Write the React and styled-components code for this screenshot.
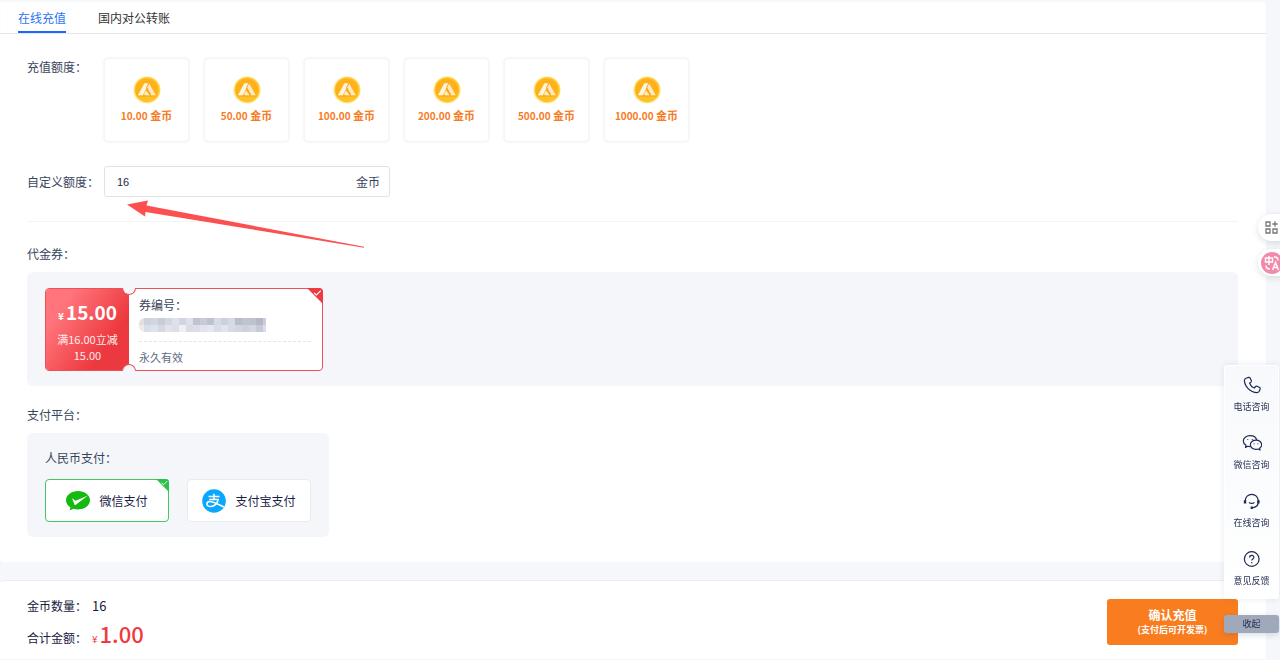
import { useState } from 'react'
import styled, { createGlobalStyle } from 'styled-components'

const GlobalStyle = createGlobalStyle`
  * {
    box-sizing: border-box;
  }
  body {
    margin: 0;
    background: #f5f7fa;
    color: #38445c;
    font-family: 'Noto Sans CJK SC', 'Noto Sans', sans-serif;
    font-size: 12px;
    line-height: 18px;
  }
  button, input {
    font: inherit;
    color: inherit;
  }
  button {
    padding: 0;
    cursor: pointer;
  }
`

const Page = styled.div`
  position: relative;
  min-height: 100vh;
  padding-right: 14px;
  overflow: hidden;
`

const Card = styled.main`
  background: #fff;
  border-radius: 0 0 4px 4px;
  padding-bottom: 25px;
`

const Tabs = styled.nav`
  display: flex;
  gap: 32px;
  height: 34px;
  padding: 0 18px;
  border-bottom: 1px solid #e5e8f0;
  box-shadow: inset 0 2px 2px #f7f8fa;
`

const Tab = styled.a`
  height: 33px;
  padding-top: 9px;
  text-decoration: none;
  color: ${p => p.$active ? '#2b74f5' : '#333'};
  border-bottom: 2px solid ${p => p.$active ? '#1769ff' : 'transparent'};
`

const Body = styled.div`
  padding: 24px 28px 0 27px;
`

const Row = styled.div`
  display: flex;
  align-items: ${p => p.$align || 'center'};
  margin-bottom: 24px;
`

const RowLabel = styled.label`
  width: 77px;
  flex: none;
`

const Amounts = styled.div`
  display: flex;
  gap: 15px;
`

const Amount = styled.button`
  display: flex;
  flex-direction: column;
  align-items: center;
  gap: 3px;
  width: 85px;
  height: 84px;
  padding-top: 17px;
  background: #fff;
  border: 1px solid #f5f5f6;
  border-radius: 4px;
  box-shadow: 0 0 3px rgba(0, 0, 0, 0.07);
  color: #f77b1f;
  font-weight: 700;
  font-size: 11px;
  line-height: 16px;
`

const Num = styled.span`
  font-size: ${p => p.$size || 10}px;
`

const CustomBox = styled.div`
  display: flex;
  align-items: center;
  width: 286px;
  height: 31px;
  padding: 0 9px 0 12px;
  border: 1px solid #dfe2ea;
  border-radius: 3px;
  input {
    flex: 1;
    min-width: 0;
    padding: 0;
    border: 0;
    outline: 0;
    background: none;
    color: #1d2740;
    font-family: 'Liberation Sans', sans-serif;
    font-size: 11px;
  }
`

const Divider = styled.hr`
  margin: 0 0 23px;
  border: 0;
  border-top: 1px solid #f3f4f6;
`

const Title = styled.h2`
  margin: 0 0 ${p => p.$inner ? 12 : 9}px;
  font-size: 12px;
  font-weight: 400;
`

const Panel = styled.section`
  width: ${p => p.$width || 'auto'};
  margin-bottom: 20px;
  padding: 16px 18px 15px;
  background: #f4f6fa;
  border-radius: 6px;
  &:last-child {
    margin-bottom: 0;
  }
`

const Voucher = styled.button`
  position: relative;
  display: flex;
  width: 278px;
  height: 83px;
  background: #fff;
  border: 1px solid #ee5058;
  border-radius: 4px;
  text-align: left;
`

const VoucherPrice = styled.div`
  display: flex;
  flex-direction: column;
  align-items: center;
  width: 83px;
  height: 81px;
  padding: 9px 8px 0;
  border-radius: 3px 0 0 3px;
  background: linear-gradient(125deg, #ff757b 20%, #ec393f 72%);
  color: #fff;
  font-size: 11px;
  line-height: 16px;
  text-align: center;
`

const Price = styled.div`
  font-size: 19px;
  font-weight: 700;
  line-height: 28px;
  small {
    font-size: 10px;
    margin-right: 2px;
  }
`

const Condition = styled.div`
  margin-top: 1px;
  opacity: 0.9;
`

const VoucherInfo = styled.div`
  flex: 1;
  padding: 7px 11px 0 10px;
`

const Mosaic = styled.svg`
  display: block;
  width: 127px;
  height: 14px;
  margin: 4px 0 9px;
  border-radius: 6px 0 0 6px;
`

const Valid = styled.div`
  padding-top: 6px;
  border-top: 1px dashed #e3e5ea;
  color: #5c6b80;
  font-size: 11px;
`

const Notch = styled.i`
  position: absolute;
  left: 76px;
  width: 14px;
  height: 7px;
  background: #f4f6fa;
  border: 1px solid #ee5058;
  ${p => p.$bottom
    ? 'bottom: -1px; border-bottom: 0; border-radius: 7px 7px 0 0;'
    : 'top: -1px; border-top: 0; border-radius: 0 0 7px 7px;'}
`

const Corner = styled.svg`
  position: absolute;
  top: -1px;
  right: -1px;
  color: ${p => p.$color};
`

const Pays = styled.div`
  display: flex;
  gap: 18px;
`

const Pay = styled.button`
  position: relative;
  display: flex;
  align-items: center;
  justify-content: center;
  gap: 9px;
  width: 124px;
  height: 43px;
  background: #fff;
  border: 1px solid ${p => p.$active ? '#43c85f' : '#e9ebf0'};
  border-radius: 4px;
  color: #17213f;
`

const Footer = styled.footer`
  display: flex;
  justify-content: space-between;
  align-items: flex-start;
  margin-top: 18px;
  padding: 12px 28px 2px 27px;
  background: #fff;
  border-top: 1px solid #ebedf1;
  border-radius: 4px 4px 0 0;
  color: #17213f;
`

const SumRow = styled.div`
  display: flex;
  align-items: center;
  gap: 5px;
  height: ${p => p.$tall ? 38 : 26}px;
`

const Total = styled.strong`
  padding-bottom: 4px;
  color: #ee3a40;
  font-size: 22px;
  font-weight: 500;
  line-height: 30px;
  small {
    margin-right: 2px;
    font-size: 10px;
    font-weight: 400;
  }
`

const Confirm = styled.button`
  width: 131px;
  height: 46px;
  margin-top: 6px;
  border: 0;
  border-radius: 3px;
  background: #f97d1f;
  color: #fff;
  font-weight: 700;
  line-height: 16px;
  small {
    display: block;
    font-size: 9px;
    line-height: 14px;
  }
`

const Arrow = styled.svg`
  position: absolute;
  left: 126px;
  top: 200px;
`

const Extension = styled.div`
  position: fixed;
  top: 214px;
  right: -4px;
  display: flex;
  flex-direction: column;
  align-items: flex-end;
  gap: 8px;
`

const Bubble = styled.button`
  display: flex;
  align-items: center;
  width: 26px;
  height: 27px;
  padding-left: ${p => p.$tight ? 3 : 7}px;
  border: 0;
  border-radius: 14px 0 0 14px;
  background: #fff;
  box-shadow: 0 2px 6px rgba(30, 40, 60, 0.14);
`

const Side = styled.aside`
  position: fixed;
  right: 1px;
  bottom: 27px;
  width: 55px;
`

const SideList = styled.div`
  display: flex;
  flex-direction: column;
  gap: 17px;
  height: 234px;
  margin-bottom: 16px;
  padding-top: 9px;
  background: linear-gradient(#f7f9fc, #fff);
  border: 1px solid #fff;
  border-radius: 3px;
  box-shadow: 0 0 6px rgba(60, 80, 130, 0.12);
`

const SideItem = styled.a`
  display: flex;
  flex-direction: column;
  align-items: center;
  gap: 3px;
  color: #1e294d;
  font-size: 9px;
  text-decoration: none;
`

const Fold = styled.button`
  display: block;
  width: 55px;
  height: 18px;
  border: 0;
  border-radius: 3px;
  background: #9fa9b9;
  color: #1e294d;
  font-size: 9px;
  line-height: 18px;
  box-shadow: 0 2px 6px rgba(60, 80, 130, 0.2);
`

const Coin = () => (
  <svg width="28" height="28" viewBox="0 0 28 28">
    <circle cx="14" cy="14" r="13.6" fill="#ffe98c" />
    <circle cx="14.2" cy="13.7" r="12.6" fill="#ffcb38" />
    <circle cx="13.8" cy="14" r="11.6" fill="#ffb11a" />
    <path d="M5 21a11.4 11.4 0 0 0 18 0z" fill="#ffc329" />
    <path d="M11.400 7.200h4.200L9.900 19.300H4.900z" fill="#fff5dc" />
    <path d="M16 7.200l6.800 12.100h-4.700l-4.200-7.700z" fill="#ffebc2" />
    <path d="M13 14.400l3.600 4.900h-4.200l-1.400-1.600z" fill="#fff0cd" />
    <path d="M15.800 7.200l-2 4.300 3.900 7.700" fill="none" stroke="#f7892b" strokeWidth="0.7" />
  </svg>
)

const Check = ({ color, size }) => (
  <Corner $color={color} width={size} height={size} viewBox="0 0 16 16">
    <path d="M0 0h12q4 0 4 4v12z" fill="currentColor" />
    <path d="M7 4.8l2.4 2.2 4.4-4.4" fill="none" stroke="#fff" strokeWidth="1.1" />
  </Corner>
)

const WechatPay = () => (
  <svg width="24" height="22" viewBox="0 0 24 22">
    <path d="M12 1C5.4 1 0 5 0 10.2c0 2.900 1.700 5.400 4.400 7.100L3.700 20.600l3.600-1.900c1.500.5 3 .7 4.700.7 6.600 0 12-4.100 12-9.200S18.600 1 12 1z" fill="#15ba11" />
    <path d="M6 8.300l3.600 2.400L22 5.600 9.800 14.800q-.9.500-1.300-.4z" fill="#fff" />
  </svg>
)

const Alipay = () => (
  <svg width="24" height="24" viewBox="0 0 24 24">
    <circle cx="12" cy="12" r="11.800" fill="#0aa7ff" />
    <path d="M6.500 7.500h11M12 4.800v5.600M7.200 10.500h9c-.8 3.700-3.700 7-7.400 7-2.300 0-3.900-1-3.900-2.600 0-1.500 1.400-2.300 3-2.300 3.300 0 7.300 2.500 14.500 5.500" fill="none" stroke="#fff" strokeWidth="1.500" />
  </svg>
)

const icons = {
  phone: (
    <path d="M3.200 1.500L5.300.9q.8-.2 1.200.6l1.100 2.400q.3.800-.3 1.400L6 6.400c.8 2 2.300 3.600 4.300 4.400l1.300-1.400q.6-.6 1.400-.2l2.300 1.100q.8.400.5 1.200l-.7 2q-.5 1.600-2.200 1.600C6.500 14.700 1.300 9.200 1.200 3.600q.2-1.600 2-2.100z" />
  ),
  wechat: (
    <>
      <path d="M6.500 11.300c-.8 0-1.500-.1-2.100-.3l-2.200 1.100.5-2C1.200 9.200.2 7.800.2 6.200.2 3.400 3 1.200 6.500 1.200c3 0 5.600 1.700 6.100 4" />
      <path d="M12 5.300c-3 0-5.300 1.900-5.300 4.300s2.300 4.300 5.300 4.300c.7 0 1.300-.1 1.900-.3l1.800.9-.4-1.700c1.200-.8 1.900-1.900 1.900-3.200 0-2.400-2.300-4.300-5.200-4.300z" />
      <path d="M4.300 4.500v.8M8.500 4.500v.8M10.200 8.500v.7M13.600 8.500v.7" />
    </>
  ),
  online: (
    <>
      <path d="M2 9V7.800a6 6 0 0 1 12 0V9c0 3-2.400 5-5.500 5.300M5.500 9.200c1.300 1.400 3.700 1.400 5 0" />
      <path d="M1.800 7.300v3M14.200 7.300v3M7 14.300h2" strokeWidth="2.200" />
    </>
  ),
  feedback: (
    <>
      <circle cx="8" cy="8" r="6.800" />
      <path d="M6 6.600C6 4 10 4 10 6.500 10 8 8 8 8 9.500M8 10.700v1.200" />
    </>
  ),
}

const sideItems = [
  { icon: 'phone', name: '电话咨询' },
  { icon: 'wechat', name: '微信咨询' },
  { icon: 'online', name: '在线咨询' },
  { icon: 'feedback', name: '意见反馈' },
]

const amounts = ['10.00', '50.00', '100.00', '200.00', '500.00', '1000.00']

const mosaic = [
  ['#e2dfe2', '#ccd2df', '#d4d6df', '#c9cbd5', '#d3d7e1', '#dde1e9', '#d2d5df', '#dde0e8', '#c0c4d0', '#c9ccd7', '#bec2ce', '#d8dbe4', '#cdd0dc', '#d5d9e3', '#b8bdca', '#c0c3cf', '#bec1ce', '#b5b7c4', '#c9cfe0'],
  ['#eeeaea', '#d9dfe8', '#dfe3ec', '#d5d8e2', '#e3e4ea', '#dbdfe7', '#f0f0f3', '#d9dce6', '#dcdfe9', '#e2e4ec', '#e6e8f0', '#d8dce6', '#e0e4eb', '#d8dbe5', '#d2d6e1', '#cdd1dd', '#d5d7e0', '#c7cad7', '#d8dde9'],
]

export default function App() {
  const [amount, setAmount] = useState('16')
  const [pay, setPay] = useState('wechat')

  return (
    <Page>
      <GlobalStyle />
      <Card>
        <Tabs>
          <Tab href="#online" $active>在线充值</Tab>
          <Tab href="#transfer">国内对公转账</Tab>
        </Tabs>
        <Body>
          <Row $align="flex-start">
            <RowLabel as="span">充值额度：</RowLabel>
            <Amounts>
              {amounts.map((a) => (
                <Amount key={a} type="button" onClick={() => setAmount(String(parseInt(a)))}>
                  <Coin />
                  <span><Num>{a}</Num> 金币</span>
                </Amount>
              ))}
            </Amounts>
          </Row>
          <Row>
            <RowLabel htmlFor="custom">自定义额度：</RowLabel>
            <CustomBox>
              <input id="custom" value={amount} onChange={(e) => setAmount(e.target.value)} />
              <span>金币</span>
            </CustomBox>
          </Row>
          <Divider />
          <Title>代金券：</Title>
          <Panel>
            <Voucher type="button">
              <VoucherPrice>
                <Price><small>¥</small>15.00</Price>
                <Condition>满16.00立减15.00</Condition>
              </VoucherPrice>
              <VoucherInfo>
                <div>券编号：</div>
                <Mosaic viewBox="0 0 127 14">
                  {mosaic.map((line, y) => line.map((c, x) => (
                    <rect key={`${x}-${y}`} x={x * 7 - 2} y={y * 7} width="7" height="7" fill={c} />
                  )))}
                </Mosaic>
                <Valid>永久有效</Valid>
              </VoucherInfo>
              <Notch />
              <Notch $bottom />
              <Check color="#ee3a40" size={16} />
            </Voucher>
          </Panel>
          <Title>支付平台：</Title>
          <Panel $width="302px">
            <Title as="h3" $inner>人民币支付：</Title>
            <Pays>
              <Pay type="button" $active={pay === 'wechat'} onClick={() => setPay('wechat')}>
                <WechatPay />
                微信支付
                {pay === 'wechat' && <Check color="#2bc24b" size={13} />}
              </Pay>
              <Pay type="button" $active={pay === 'alipay'} onClick={() => setPay('alipay')}>
                <Alipay />
                支付宝支付
                {pay === 'alipay' && <Check color="#2bc24b" size={13} />}
              </Pay>
            </Pays>
          </Panel>
        </Body>
      </Card>

      <Footer>
        <div>
          <SumRow>金币数量： <Num $size={13}>{amount}</Num></SumRow>
          <SumRow $tall>合计金额： <Total><small>¥</small>1.00</Total></SumRow>
        </div>
        <Confirm type="button">
          确认充值
          <small>(支付后可开发票)</small>
        </Confirm>
      </Footer>

      <Arrow width="240" height="50" viewBox="0 0 240 50">
        <path d="M1 4.500L22 .5l-1.500 5L238 46.800v1L19.500 12l-.5 4.500z" fill="#fc5050" />
      </Arrow>

      <Extension>
        <Bubble type="button" aria-label="apps">
          <svg width="13" height="13" viewBox="0 0 13 13" fill="none" stroke="#777" strokeWidth="1.300">
            <path d="M1 1h4v4H1zM1 8h4v4H1zM8 8h4v4H8zM10 .3v5.400M7.300 3h5.400" />
          </svg>
        </Bubble>
        <Bubble type="button" $tight aria-label="translate">
          <svg width="22" height="22" viewBox="0 0 22 22">
            <circle cx="11" cy="11" r="11" fill="#f28ba9" />
            <path d="M4.500 6h7v4h-7zM8 4v9M13 5q4-.5 4 3.500M5 13.500q0 3.500 4 3.500M11.500 18l3-7.500 3 7.500M12.500 15.500h4" fill="none" stroke="#fff" strokeWidth="1.400" />
          </svg>
        </Bubble>
      </Extension>

      <Side>
        <SideList>
          {sideItems.map((item) => (
            <SideItem key={item.icon} href={`#${item.icon}`}>
              <svg width="20" height="20" viewBox="-1 -1 18.500 18" fill="none" stroke="currentColor" strokeWidth="1.100" strokeLinejoin="round">
                {icons[item.icon]}
              </svg>
              {item.name}
            </SideItem>
          ))}
        </SideList>
        <Fold type="button">收起</Fold>
      </Side>
    </Page>
  )
}
